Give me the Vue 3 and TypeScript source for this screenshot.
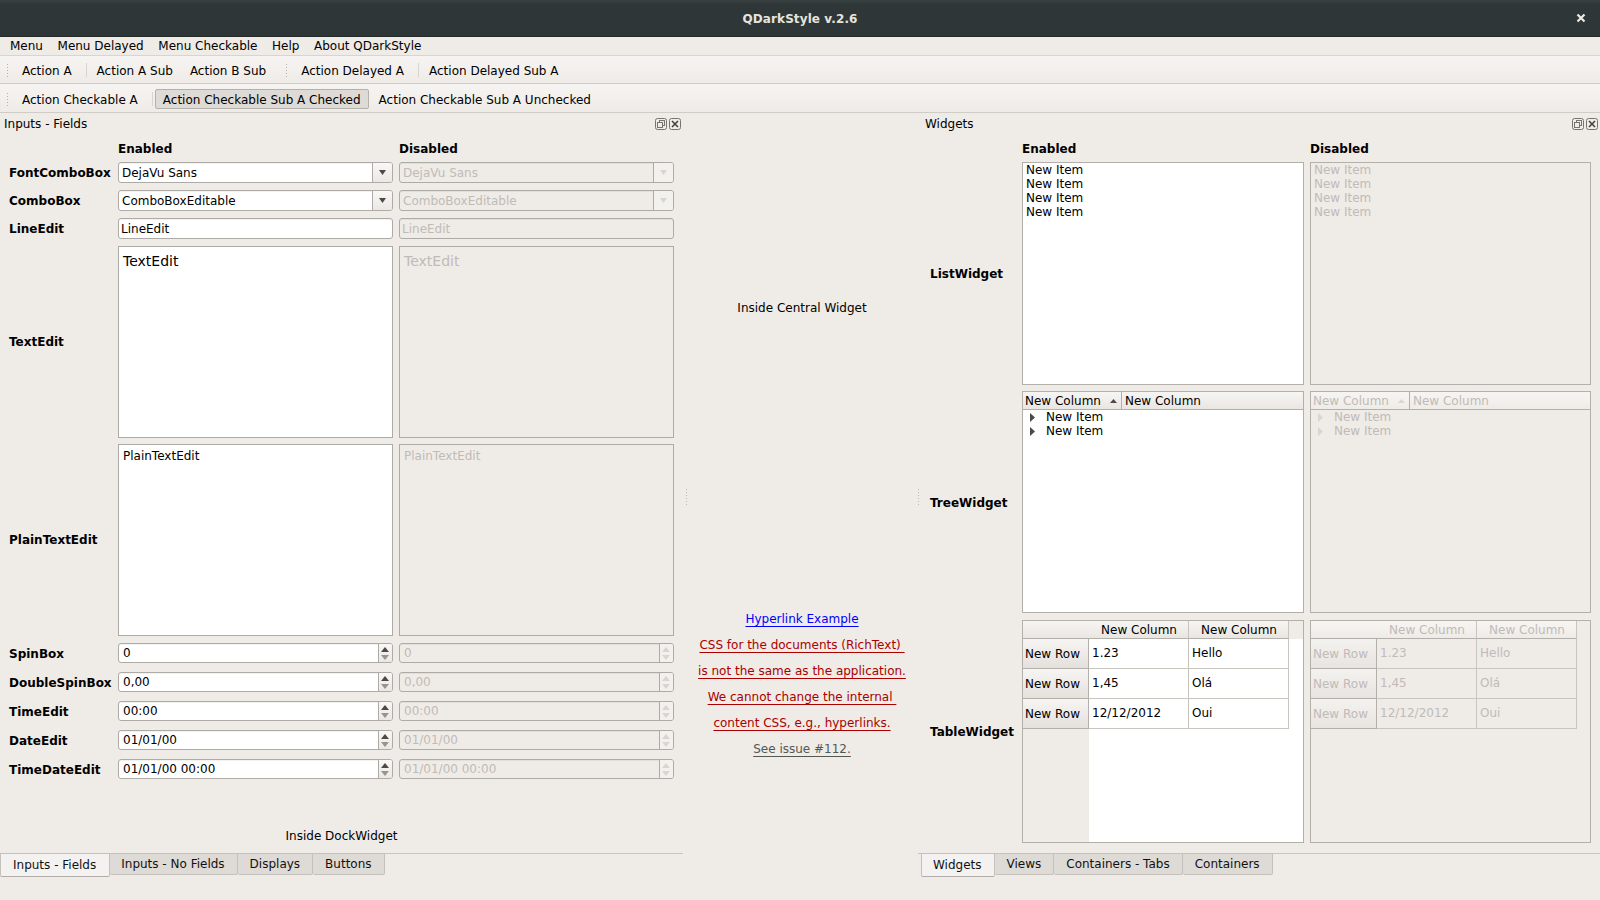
<script setup lang="ts">
type Kind = 'combo' | 'line' | 'text' | 'plain' | 'spin'
interface Row { label: string; kind: Kind; value: string }

const menus = ['Menu', 'Menu Delayed', 'Menu Checkable', 'Help', 'About QDarkStyle']
const formRows: Row[] = [
  { label: 'FontComboBox', kind: 'combo', value: 'DejaVu Sans' },
  { label: 'ComboBox', kind: 'combo', value: 'ComboBoxEditable' },
  { label: 'LineEdit', kind: 'line', value: 'LineEdit' },
  { label: 'TextEdit', kind: 'text', value: 'TextEdit' },
  { label: 'PlainTextEdit', kind: 'plain', value: 'PlainTextEdit' },
  { label: 'SpinBox', kind: 'spin', value: '0' },
  { label: 'DoubleSpinBox', kind: 'spin', value: '0,00' },
  { label: 'TimeEdit', kind: 'spin', value: '00:00' },
  { label: 'DateEdit', kind: 'spin', value: '01/01/00' },
  { label: 'TimeDateEdit', kind: 'spin', value: '01/01/00 00:00' },
]
const states = ['enabled', 'disabled']
const listItems = ['New Item', 'New Item', 'New Item', 'New Item']
const tableRows = [
  ['1.23', 'Hello'],
  ['1,45', 'Olá'],
  ['12/12/2012', 'Oui'],
]
const richLines = [
  'CSS for the documents (RichText) ',
  'is not the same as the application.',
  'We cannot change the internal ',
  'content CSS, e.g., hyperlinks.',
]
const leftTabs = ['Inputs - No Fields', 'Displays', 'Buttons']
const rightTabs = ['Views', 'Containers - Tabs', 'Containers']
</script>

<template>
  <div class="window">
    <header class="titlebar">
      <span class="title">QDarkStyle v.2.6</span>
      <svg class="win-close" width="10" height="10" viewBox="0 0 10 10">
        <path d="M1.5 1.5 L8.5 8.5 M8.5 1.5 L1.5 8.5" stroke="#eceae7" stroke-width="2.2" fill="none" />
      </svg>
    </header>

    <nav class="menubar">
      <span v-for="m in menus" :key="m" class="menu-item">{{ m }}</span>
    </nav>

    <div class="toolbar tb-one">
      <i class="grip"></i>
      <span class="tool">Action A</span>
      <i class="tool-sep"></i>
      <span class="tool">Action A Sub</span>
      <span class="tool">Action B Sub</span>
      <i class="grip grip-mid"></i>
      <span class="tool">Action Delayed A</span>
      <i class="tool-sep"></i>
      <span class="tool">Action Delayed Sub A</span>
    </div>
    <div class="toolbar tb-two">
      <i class="grip"></i>
      <span class="tool">Action Checkable A</span>
      <i class="tool-sep"></i>
      <span class="tool checked">Action Checkable Sub A Checked</span>
      <span class="tool">Action Checkable Sub A Unchecked</span>
    </div>

    <main class="main">
      <!-- left dock -->
      <section class="dock dock-left">
        <div class="dock-title">
          <span>Inputs - Fields</span>
          <span class="dock-btns">
            <svg width="12" height="12" viewBox="0 0 12 12" fill="none" stroke="#77736f">
              <rect x="0.5" y="0.5" width="11" height="11" rx="2" />
              <rect x="4.5" y="2.5" width="5" height="5" />
              <rect x="2.5" y="4.5" width="5" height="5" fill="#efebe7" />
            </svg>
            <svg width="12" height="12" viewBox="0 0 12 12" fill="none" stroke="#77736f">
              <rect x="0.5" y="0.5" width="11" height="11" rx="2" />
              <path d="M3 3 L9 9 M9 3 L3 9" stroke="#44413e" stroke-width="1.6" />
            </svg>
          </span>
        </div>
        <div class="form">
          <span></span>
          <b class="col-head">Enabled</b>
          <b class="col-head">Disabled</b>
          <template v-for="row in formRows" :key="row.label">
            <b class="row-label">{{ row.label }}</b>
            <div v-for="s in states" :key="s" class="cell" :class="s">
              <div class="field" :class="'f-' + row.kind">
                <span class="field-text">{{ row.value }}</span>
                <span v-if="row.kind === 'combo'" class="combo-btn">
                  <svg width="7" height="5" viewBox="0 0 7 5"><path class="arrow" d="M0 0 H7 L3.5 5 Z" /></svg>
                </span>
                <span v-if="row.kind === 'spin'" class="spin-btn">
                  <svg width="8" height="5" viewBox="0 0 8 5"><path class="arrow" d="M0 5 H8 L4 0 Z" /></svg>
                  <svg width="8" height="5" viewBox="0 0 8 5"><path class="arrow faint" d="M0 0 H8 L4 5 Z" /></svg>
                </span>
              </div>
            </div>
          </template>
        </div>
        <div class="dock-note">Inside DockWidget</div>
        <div class="tabbar tabbar-left">
          <span class="tab active">Inputs - Fields</span>
          <span v-for="t in leftTabs" :key="t" class="tab">{{ t }}</span>
        </div>
      </section>

      <div class="splitter"></div>

      <!-- central -->
      <section class="central">
        <div class="central-note">Inside Central Widget</div>
        <div class="rich">
          <a class="rich-line link">Hyperlink Example</a>
          <a v-for="l in richLines" :key="l" class="rich-line red">{{ l }}</a>
          <a class="rich-line gray">See issue #112.</a>
        </div>
      </section>

      <div class="splitter splitter-right"></div>

      <!-- right dock -->
      <section class="dock dock-right">
        <div class="dock-title">
          <span>Widgets</span>
          <span class="dock-btns">
            <svg width="12" height="12" viewBox="0 0 12 12" fill="none" stroke="#77736f">
              <rect x="0.5" y="0.5" width="11" height="11" rx="2" />
              <rect x="4.5" y="2.5" width="5" height="5" />
              <rect x="2.5" y="4.5" width="5" height="5" fill="#efebe7" />
            </svg>
            <svg width="12" height="12" viewBox="0 0 12 12" fill="none" stroke="#77736f">
              <rect x="0.5" y="0.5" width="11" height="11" rx="2" />
              <path d="M3 3 L9 9 M9 3 L3 9" stroke="#44413e" stroke-width="1.6" />
            </svg>
          </span>
        </div>
        <div class="views">
          <span></span>
          <b class="col-head">Enabled</b>
          <b class="col-head">Disabled</b>

          <b class="row-label">ListWidget</b>
          <div v-for="s in states" :key="'l' + s" class="view list" :class="s">
            <div v-for="(it, i) in listItems" :key="i" class="list-item">{{ it }}</div>
          </div>

          <b class="row-label">TreeWidget</b>
          <div v-for="s in states" :key="'t' + s" class="view tree" :class="s">
            <div class="tree-head">
              <span class="tree-col first">
                New Column
                <svg width="7" height="4" viewBox="0 0 7 4"><path class="arrow" d="M0 4 H7 L3.5 0 Z" /></svg>
              </span>
              <span class="tree-col">New Column</span>
            </div>
            <div v-for="n in 2" :key="n" class="tree-item">
              <svg width="5" height="9" viewBox="0 0 5 9"><path class="arrow" d="M0 0 L5 4.5 L0 9 Z" /></svg>
              <span>New Item</span>
            </div>
          </div>

          <b class="row-label">TableWidget</b>
          <div v-for="s in states" :key="'g' + s" class="view table" :class="s">
            <span class="th corner"></span>
            <span class="th">New Column</span>
            <span class="th">New Column</span>
            <span class="th-rest"></span>
            <template v-for="r in tableRows" :key="r[0]">
              <span class="rh">New Row</span>
              <span class="td">{{ r[0] }}</span>
              <span class="td">{{ r[1] }}</span>
              <span class="td-rest"></span>
            </template>
            <span class="rh-rest"></span>
          </div>
        </div>
        <div class="tabbar tabbar-right">
          <span class="tab active">Widgets</span>
          <span v-for="t in rightTabs" :key="t" class="tab">{{ t }}</span>
        </div>
      </section>
    </main>
  </div>
</template>

<style scoped>
.window {
  width: 1600px;
  height: 900px;
  display: flex;
  flex-direction: column;
  overflow: hidden;
  background: #efebe7;
  color: #000;
  font: 12px/14px "DejaVu Sans", sans-serif;
}
.titlebar {
  height: 37px;
  flex: none;
  display: flex;
  align-items: center;
  justify-content: center;
  position: relative;
  background: linear-gradient(#3a4143, #2f3638 12%);
  box-shadow: inset 0 -1px 0 #232829;
}
.title { color: #e6e4df; font-weight: 700; font-size: 12px; letter-spacing: 0.1px; }
.win-close { position: absolute; right: 14px; top: 13px; }

.menubar {
  height: 19px;
  flex: none;
  display: flex;
  align-items: center;
  padding-left: 2.7px;
  border-bottom: 1px solid #d8d4d0;
  box-sizing: border-box;
}
.menu-item { padding: 0 7.3px; }

.toolbar {
  flex: none;
  display: flex;
  align-items: center;
  box-sizing: border-box;
  padding-left: 6px;
  gap: 1px;
  background: linear-gradient(#f6f4f2, #efebe7);
  border-bottom: 1px solid #d0ccc8;
}
.tb-one { height: 28px; padding-top: 1px; }
.tb-two { height: 29px; padding-top: 2px; }
.grip {
  width: 3px;
  height: 14px;
  margin-right: 4px;
  background: radial-gradient(circle, #b5b1ad 0.8px, transparent 1px) 0 0 / 3px 3px;
}
.grip-mid { margin-left: 10px; }
.tool {
  height: 20px;
  line-height: 22px;
  padding: 0 8px;
  box-sizing: border-box;
  white-space: pre;
}
.tool-sep {
  width: 1px;
  height: 14px;
  margin: 0 1px 0 5px;
  background: #d8d4d0;
}
.tool.checked {
  line-height: 21px;
  padding: 0 7px;
  margin-right: 1px;
  background: #dedad6;
  border: 1px solid #b4b0ac;
  border-radius: 2px;
}

.main {
  flex: 1;
  display: flex;
  min-height: 0;
}
.dock {
  display: flex;
  flex-direction: column;
  flex: none;
}
.dock-left { width: 683px; }
.dock-right { width: 682px; }
.dock-title {
  height: 21px;
  flex: none;
  display: flex;
  align-items: center;
  justify-content: space-between;
  padding: 0 2px 0 4px;
}
.dock-right .dock-title { padding: 0 2px 0 7px; }
.dock-btns { display: flex; gap: 2px; }

.col-head { align-self: center; }
.row-label { align-self: center; }

.form {
  display: grid;
  grid-template-columns: 118px 275px 275px;
  grid-template-rows: 13px 21px 21px 21px 191px 192px 22px 22px 22px 22px 21px;
  row-gap: 7px;
  margin-top: 8px;
}
.form > .col-head:nth-child(3) { margin-left: 6px; }
.form .row-label { padding-left: 9px; }
.cell { display: flex; }
.cell.disabled { margin-left: 6px; margin-right: -6px; color: #bfbbb7; }
.field {
  flex: 1;
  position: relative;
  display: flex;
  align-items: center;
  box-sizing: border-box;
  border: 1px solid #aeaaa6;
  border-radius: 3px;
  background: #fff;
  box-shadow: inset 0 1px 0 rgba(0, 0, 0, 0.05);
  height: 21px;
  padding-left: 3px;
  overflow: hidden;
}
.disabled .field { background: #efebe7; }
.f-line { padding-left: 2px; }
.f-spin { height: 20px; padding-left: 4px; }
.f-text, .f-plain {
  height: 192px;
  border-radius: 0;
  align-items: flex-start;
  padding: 4px;
  box-shadow: none;
}
.f-text .field-text { font-size: 14px; line-height: 20px; }
.field-text { flex: 1; white-space: pre; }
.combo-btn {
  width: 20px;
  height: 100%;
  flex: none;
  display: flex;
  align-items: center;
  justify-content: center;
  box-sizing: border-box;
  border-left: 1px solid #aeaaa6;
  padding-right: 1px;
  background: linear-gradient(#f9f8f6, #ebe8e4);
}
.spin-btn {
  width: 14px;
  height: 100%;
  flex: none;
  display: flex;
  flex-direction: column;
  align-items: center;
  justify-content: center;
  gap: 3px;
  box-sizing: border-box;
  border-left: 1px solid #aeaaa6;
  padding-right: 1px;
  background: linear-gradient(#f9f8f6, #ebe8e4);
}
.disabled .combo-btn, .disabled .spin-btn { background: #f3f1ee; }
.arrow { fill: #4c4946; }
.arrow.faint { fill: #97938f; }
.disabled .arrow, .disabled .arrow.faint { fill: #d9d5d1; }

.dock-note {
  margin-top: auto;
  text-align: center;
  margin-bottom: 10px;
}
.tabbar {
  flex: none;
  display: flex;
  height: 47px;
  margin-top: auto;
  box-sizing: border-box;
  align-items: flex-start;
  box-shadow: inset 0 1px 0 #c9c5c1;
}
.dock-note + .tabbar { margin-top: 0; }
.tabbar-right { padding-left: 3px; }
.tab {
  height: 22px;
  line-height: 20px;
  padding: 0 12px;
  box-sizing: border-box;
  background: #dedad6;
  border: 1px solid #c4c0bc;
  border-left: 0;
  border-radius: 0 0 2px 2px;
  color: #111;
}
.tab.active {
  height: 24px;
  line-height: 23px;
  background: #f4f2f0;
  border-left: 1px solid #c4c0bc;
  border-bottom-color: #b0aca8;
}
.tabbar-right .tab.active { padding-left: 11px; }
.tabbar-left .tab.active { padding-right: 13px; }
.tabbar-left .tab.active + .tab { padding-left: 11px; }

.splitter {
  width: 1px;
  flex: none;
  margin-left: 3px;
  margin-right: -4px;
  height: 16px;
  align-self: flex-start;
  margin-top: 376px;
  background: repeating-linear-gradient(#bdb9b5 0 1px, transparent 1px 3px);
}
.splitter-right {
  margin-left: -1px;
  margin-right: -1px;
}
.central {
  width: 236px;
  flex: none;
  box-sizing: border-box;
  padding-left: 2px;
  display: flex;
  flex-direction: column;
  align-items: center;
}
.central-note { margin-top: 188px; }
.rich {
  margin-top: 292px;
  display: flex;
  flex-direction: column;
  align-items: center;
}
.rich-line {
  white-space: pre;
  height: 26px;
  line-height: 25px;
  text-decoration: underline;
  text-underline-offset: 3px;
}
.link { color: #0000ff; }
.red { color: #aa0000; }
.gray { color: #555753; }

.views {
  display: grid;
  grid-template-columns: 104px 282px 281px;
  grid-template-rows: 14px 223px 223px 223px;
  row-gap: 6px;
  margin-top: 8px;
}
.views .row-label { padding-left: 12px; }
.views > .col-head:nth-child(3) { margin-left: 6px; }
.view {
  box-sizing: border-box;
  border: 1px solid #b3afab;
}
.view.disabled { margin-left: 6px; margin-right: -6px; color: #bfbbb7; }
.view.enabled { background: #fff; }
.tree { margin-bottom: 1px; }
.list { padding: 0 3px; }
.list-item { height: 14px; line-height: 14px; }
.tree-head {
  display: flex;
  height: 18px;
  box-sizing: border-box;
  border-bottom: 1px solid #b3afab;
  background: linear-gradient(#f7f5f3, #e9e6e2);
}
.disabled .tree-head { background: linear-gradient(#f7f5f3, #efebe7); }
.tree-col {
  flex: none;
  padding-left: 2px;
  display: flex;
  align-items: center;
  line-height: 16px;
}
.tree-col.first {
  width: 99px;
  box-sizing: border-box;
  border-right: 1px solid #b3afab;
  position: relative;
}
.tree-col.first svg { position: absolute; right: 4px; top: 7px; }
.tree-col + .tree-col { padding-left: 3px; }
.tree-item {
  height: 14px;
  display: flex;
  align-items: center;
  padding-left: 7px;
  gap: 11px;
}
.table {
  display: grid;
  grid-template-columns: 66px 100px 100px 1fr;
  grid-template-rows: 18px 30px 30px 30px 1fr;
}
.th-rest, .rh-rest { background: #efebe7; }
.th {
  background: linear-gradient(#f7f5f3, #e9e6e2);
  text-align: center;
  line-height: 18px;
  padding-left: 1px;
  border-bottom: 1px solid #b3afab;
  border-right: 1px solid #c8c4c0;
  box-sizing: border-box;
}
.th.corner { border-right: 0; }
.disabled .th { background: linear-gradient(#f7f5f3, #efebe7); }
.rh {
  background: linear-gradient(#f7f5f3, #e4e0dc);
  border-bottom: 1px solid #b3afab;
  border-right: 1px solid #b3afab;
  box-sizing: border-box;
  padding-left: 2px;
  line-height: 30px;
}
.disabled .rh { background: linear-gradient(#f4f2ef, #e8e4e0); }
.td {
  border-bottom: 1px solid #c8c4c0;
  border-right: 1px solid #c8c4c0;
  box-sizing: border-box;
  padding-left: 3px;
  line-height: 28px;
}
.rh-rest { grid-column: 1; }
</style>

<style>
html, body { margin: 0; padding: 0; background: #efebe7; }
</style>
